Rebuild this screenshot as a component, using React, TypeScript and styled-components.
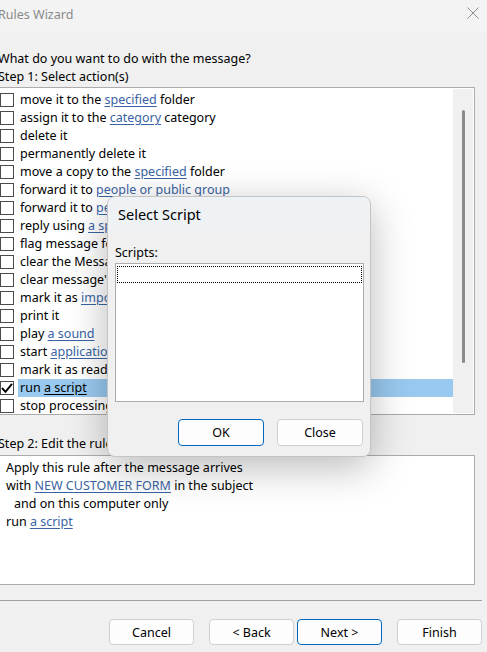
import React from 'react';
import styled, { createGlobalStyle } from 'styled-components';

interface Part {
    text: string;
    link?: boolean;
}

interface Action {
    parts: Part[];
    checked?: boolean;
}

const t = (text: string): Part => ({ text });
const l = (text: string): Part => ({ text, link: true });

const actions: Action[] = [
    { parts: [t('move it to the '), l('specified'), t(' folder')] },
    { parts: [t('assign it to the '), l('category'), t(' category')] },
    { parts: [t('delete it')] },
    { parts: [t('permanently delete it')] },
    { parts: [t('move a copy to the '), l('specified'), t(' folder')] },
    { parts: [t('forward it to '), l('people or public group')] },
    { parts: [t('forward it to '), l('people or public group'), t(' as an attachment')] },
    { parts: [t('reply using '), l('a specific template')] },
    { parts: [t('flag message for '), l('follow up at this time')] },
    { parts: [t('clear the Message Flag')] },
    { parts: [t("clear message's categories")] },
    { parts: [t('mark it as '), l('importance')] },
    { parts: [t('print it')] },
    { parts: [t('play '), l('a sound')] },
    { parts: [t('start '), l('application')] },
    { parts: [t('mark it as read')] },
    { parts: [t('run '), l('a script')], checked: true },
    { parts: [t('stop processing more rules')] },
];

const GlobalStyle = createGlobalStyle`
  html, body {
    margin: 0;
    padding: 0;
    background: #f0f0f0;
    overflow: hidden;
  }
  body {
    font-family: "Segoe UI", "Noto Sans", "Liberation Sans", sans-serif;
    font-size: 12.5px;
    color: #000;
  }
`;

const App = () => {
    return (
        <>
            <GlobalStyle />
            <Window>
                <TitleBar>
                    <Title>Rules Wizard</Title>
                    <CloseIcon viewBox="0 0 12 12">
                        <path d="M0.5 0.5 L11.5 11.5 M11.5 0.5 L0.5 11.5" stroke="#8c8c8c" strokeWidth="1" fill="none" />
                    </CloseIcon>
                </TitleBar>
                <Body>
                    <Label>What do you want to do with the message?</Label>
                    <Label>Step 1: Select action(s)</Label>
                    <ListBox>
                        <Rows>
                            {actions.map((a, i) => (
                                <Row key={i}>
                                    <Check>
                                        {a.checked && (
                                            <svg width="12" height="12" viewBox="0 0 12 12">
                                                <path d="M1 6 L4.5 9.8 L11 1.8" stroke="#000" strokeWidth="1.9" fill="none" />
                                            </svg>
                                        )}
                                    </Check>
                                    <RowText selected={!!a.checked}>
                                        {a.parts.map((p, j) =>
                                            p.link ? (
                                                <Link key={j} dark={!!a.checked}>{p.text}</Link>
                                            ) : (
                                                <span key={j}>{p.text}</span>
                                            )
                                        )}
                                    </RowText>
                                </Row>
                            ))}
                        </Rows>
                        <ScrollTrack>
                            <Thumb />
                        </ScrollTrack>
                    </ListBox>
                    <StepTwo>Step 2: Edit the rule description (click an underlined value)</StepTwo>
                    <Description>
                        <DescLine>Apply this rule after the message arrives</DescLine>
                        <DescLine>
                            with <Link>NEW CUSTOMER FORM</Link> in the subject
                        </DescLine>
                        <DescLine indent>and on this computer only</DescLine>
                        <DescLine>
                            run <Link>a script</Link>
                        </DescLine>
                    </Description>
                    <Separator />
                    <ButtonRow>
                        <Button>Cancel</Button>
                        <ButtonPair>
                            <Button>&lt; Back</Button>
                            <Button primary>Next &gt;</Button>
                        </ButtonPair>
                        <Button>Finish</Button>
                    </ButtonRow>
                </Body>

                <Dialog>
                    <DialogTitle>Select Script</DialogTitle>
                    <DialogBody>
                        <span>Scripts:</span>
                        <ScriptList>
                            <FocusRow />
                        </ScriptList>
                        <DialogButtons>
                            <Button primary>OK</Button>
                            <Button>Close</Button>
                        </DialogButtons>
                    </DialogBody>
                </Dialog>
            </Window>
        </>
    );
};

export default App;

const Window = styled.div`
  position: relative;
  width: 489px;
  height: 652px;
  margin-left: -3px;
`;

const TitleBar = styled.div`
  height: 32px;
  display: flex;
  align-items: center;
  justify-content: space-between;
  padding: 0 7px 0 1px;
  background: #f3f3f3;
  box-sizing: border-box;
`;

const Title = styled.span`
  color: #8a8a8a;
  font-size: 12.5px;
  margin-top: -4px;
`;

const CloseIcon = styled.svg`
  width: 12px;
  height: 12px;
  margin-top: -6px;
`;

const Body = styled.div`
  display: flex;
  flex-direction: column;
  padding: 18px 0 0 1px;
`;

const Label = styled.div`
  height: 18px;
  line-height: 18px;
`;

const ListBox = styled.div`
  margin-top: 1px;
  margin-left: -1px;
  width: 478px;
  height: 328px;
  box-sizing: border-box;
  border: 1px solid #acacac;
  background: #fff;
  display: flex;
  padding: 1px;
`;

const Rows = styled.div`
  flex: 1;
  display: flex;
  flex-direction: column;
  padding-top: 2px;
`;

const Row = styled.div`
  height: 18px;
  display: flex;
  align-items: center;
`;

const Check = styled.div`
  width: 14px;
  height: 14px;
  box-sizing: border-box;
  border: 1px solid #4a4a4a;
  background: #fff;
  margin-left: 1px;
  display: flex;
  align-items: center;
  justify-content: center;
  flex: none;
`;

const RowText = styled.div<{ selected: boolean }>`
  flex: 1;
  height: 18px;
  line-height: 18px;
  margin-left: 4px;
  padding-left: 2px;
  white-space: nowrap;
  background: ${({ selected }) => (selected ? '#99c9ef' : 'transparent')};
`;

const Link = styled.span<{ dark?: boolean }>`
  color: ${({ dark }) => (dark ? '#000' : '#3a63a3')};
  text-decoration: underline;
  text-underline-offset: 2px;
`;

const ScrollTrack = styled.div`
  width: 20px;
  background: #f0f0f0;
  display: flex;
  justify-content: center;
  padding-top: 21px;
  box-sizing: border-box;
`;

const Thumb = styled.div`
  width: 3px;
  height: 253px;
  border-radius: 2px;
  background: #8a8a8a;
`;

const StepTwo = styled.div`
  margin-top: 20px;
  height: 18px;
  line-height: 18px;
  white-space: nowrap;
`;

const Description = styled.div`
  margin-top: 2px;
  margin-left: -1px;
  width: 478px;
  height: 130px;
  box-sizing: border-box;
  border: 1px solid #acacac;
  background: #fff;
  padding: 3px 0 0 8px;
`;

const DescLine = styled.div<{ indent?: boolean }>`
  height: 18px;
  line-height: 18px;
  white-space: nowrap;
  padding-left: ${({ indent }) => (indent ? '8px' : '0')};
`;

const Separator = styled.div`
  margin-top: 15px;
  width: 484px;
  height: 1px;
  background: #a0a0a0;
`;

const ButtonRow = styled.div`
  display: flex;
  justify-content: flex-end;
  gap: 15px;
  margin-top: 18px;
  width: 484px;
`;

const ButtonPair = styled.div`
  display: flex;
  gap: 3px;
`;

const Button = styled.button<{ primary?: boolean }>`
  width: 85px;
  height: 26px;
  box-sizing: border-box;
  border: 1px solid ${({ primary }) => (primary ? '#0067c0' : '#d0d0d0')};
  border-radius: 4px;
  background: #fdfdfd;
  font-family: inherit;
  font-size: 12.5px;
  color: #000;
  padding: 0;
`;

const Dialog = styled.div`
  position: absolute;
  left: 110px;
  top: 196px;
  width: 264px;
  height: 261px;
  box-sizing: border-box;
  border: 1px solid #c4c4c4;
  border-radius: 8px;
  background: #f0f0f0;
  overflow: hidden;
  display: flex;
  flex-direction: column;
  box-shadow: 0 10px 40px rgba(0, 0, 0, 0.28);
`;

const DialogTitle = styled.div`
  height: 37px;
  box-sizing: border-box;
  padding: 0 0 3px 10px;
  background: #eef2f5;
  font-size: 14.5px;
  display: flex;
  align-items: center;
`;

const DialogBody = styled.div`
  display: flex;
  flex-direction: column;
  padding: 10px 6px 0 7px;
  span {
    height: 18px;
    line-height: 18px;
  }
`;

const ScriptList = styled.div`
  margin-top: 1px;
  height: 139px;
  box-sizing: border-box;
  border: 1px solid #acacac;
  background: #fff;
  padding: 2px 1px;
`;

const FocusRow = styled.div`
  height: 17px;
  box-sizing: border-box;
  border: 1px dotted #000;
`;

const DialogButtons = styled.div`
  display: flex;
  justify-content: flex-end;
  gap: 13px;
  margin-top: 17px;
  padding-right: 1px;
  button {
    width: 86px;
    height: 27px;
  }
`;
